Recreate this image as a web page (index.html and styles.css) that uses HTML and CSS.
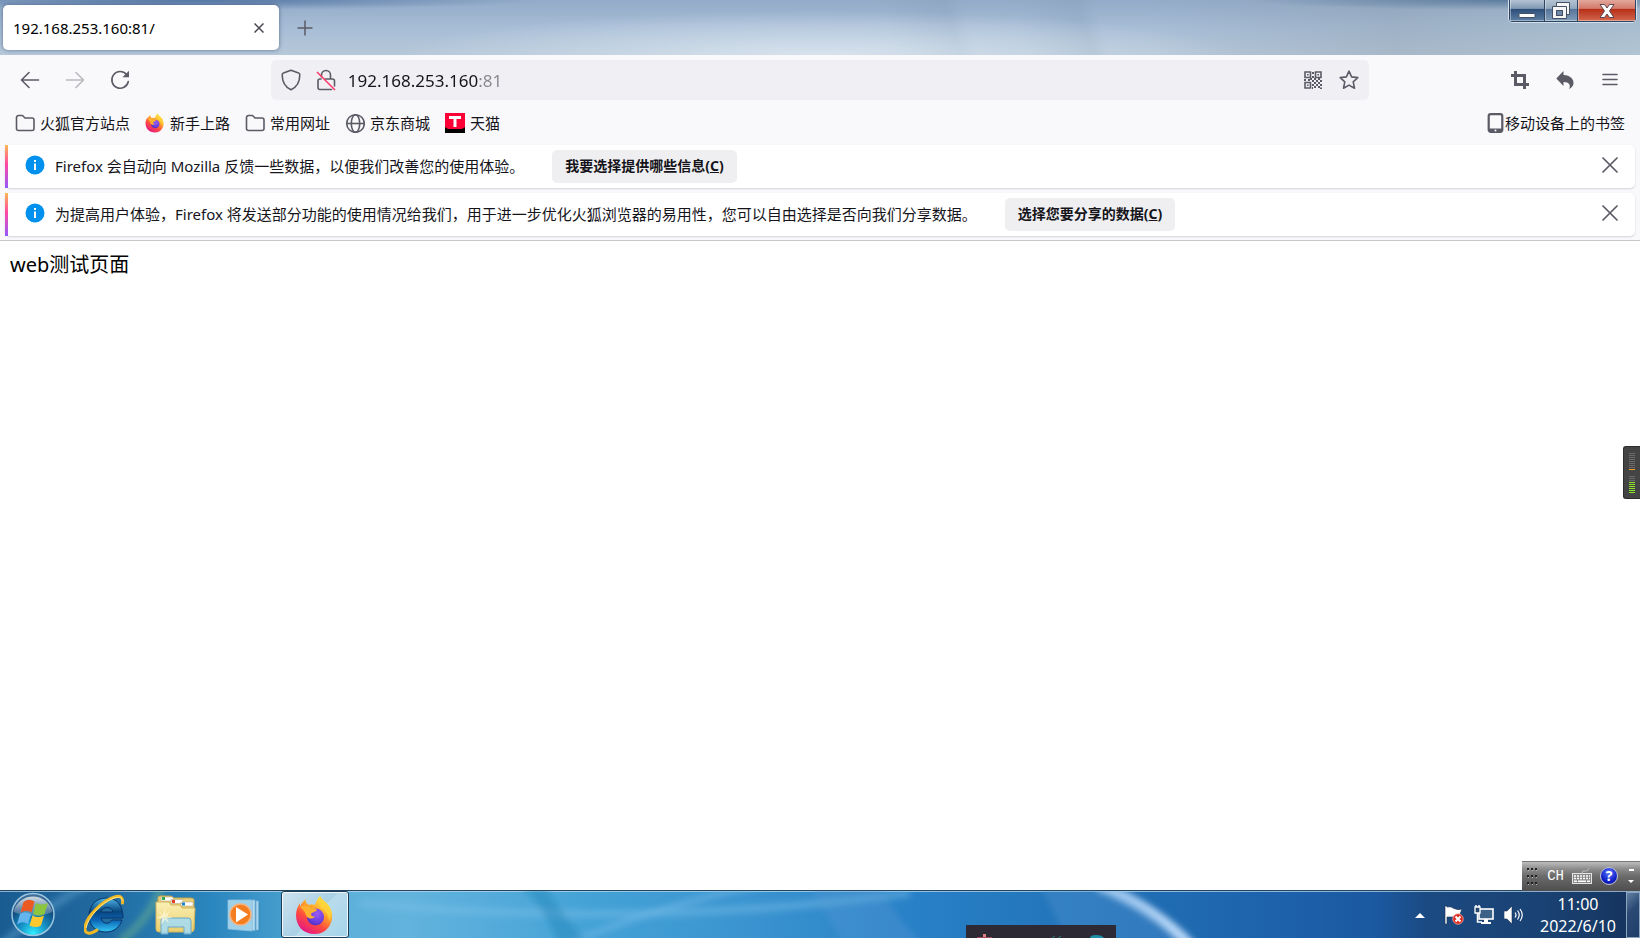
FILE: index.html
```html
<!DOCTYPE html>
<html lang="zh-CN">
<head>
<meta charset="utf-8">
<title>192.168.253.160:81/</title>
<link rel="stylesheet" href="styles.css">
</head>
<body>
<svg class="defs" aria-hidden="true">
  <defs>
    <linearGradient id="fx-body" x1="0.85" y1="0.1" x2="0.3" y2="1">
      <stop offset="0" stop-color="#fff04a"/><stop offset="0.35" stop-color="#ffa62a"/><stop offset="0.65" stop-color="#ff4b3e"/><stop offset="1" stop-color="#e31587"/>
    </linearGradient>
    <radialGradient id="fx-core" cx="0.6" cy="0.3" r="0.8">
      <stop offset="0" stop-color="#9a5cf5"/><stop offset="0.6" stop-color="#6a3fe0"/><stop offset="1" stop-color="#4a2bb0"/>
    </radialGradient>
    <symbol id="firefox" viewBox="0 0 40 40">
      <path fill="url(#fx-body)" d="M25 1c2 5 9 7 11 14 4 11-3 24-16 24C8 39 1 31 1 20c0-5 2-9 4-12v4c1-3 3-6 6-8-1 3 1 5 3 6 2-1 4-1 6 0 1-4 3-7 5-9z"/>
      <circle cx="20.500" cy="22" r="8.500" fill="url(#fx-core)"/>
      <path fill="#ffb02e" d="M5 12c4-2 8-2 11 1 3 0 5 1 6 2-1 2-5 2-6 4 0 2 2 3 4 2-2 4-8 3-9-1-1-3-3-6-6-8z"/>
      <path fill="#ffd53a" d="M25 1c2 5 9 7 11 14 1 4 0 8-2 11 0-7-4-10-8-13-3-3-3-8-1-12z" opacity="0.800"/>
    </symbol>
    <symbol id="folder" viewBox="0 0 20 20">
      <path fill="none" stroke="#5b5b66" stroke-width="1.600" stroke-linejoin="round" d="M1.500 4.500a2 2 0 0 1 2-2h4l2.500 2.500h7a2 2 0 0 1 2 2v8.500a2 2 0 0 1-2 2h-13.500a2 2 0 0 1-2-2z"/>
    </symbol>
    <symbol id="info" viewBox="0 0 20 20">
      <circle cx="10" cy="10" r="9.500" fill="#0090ed"/>
      <path fill="#fff" d="M9 5h2v2H9zM9 8.500h2V15H9z"/>
    </symbol>
    <symbol id="cross" viewBox="0 0 16 16">
      <path stroke="#5b5b66" stroke-width="1.700" stroke-linecap="round" d="M1 1l14 14M15 1L1 15"/>
    </symbol>
  </defs>
</svg>

<header class="titlebar">
  <div class="tab">
    <span class="tab-title">192.168.253.160:81/</span>
    <button class="tab-close" aria-label="关闭标签页"><svg width="10" height="10" viewBox="0 0 10 10"><path stroke="#4a4a52" stroke-width="1.500" d="M.5.500l9 9M9.500.500l-9 9"/></svg></button>
  </div>
  <button class="new-tab" aria-label="新建标签页"><svg width="16" height="16" viewBox="0 0 16 16"><path stroke="#5b5b66" stroke-width="1.500" d="M8 .5v15M.5 8h15"/></svg></button>
  <div class="window-controls">
    <button class="win-btn win-min" aria-label="最小化"><svg width="18" height="18" viewBox="0 0 18 18"><rect x="1" y="11.500" width="16" height="4" rx="1" fill="#fff" stroke="#435066"/></svg></button>
    <button class="win-btn win-max" aria-label="还原"><svg width="18" height="18" viewBox="0 0 18 18"><path fill="#f5f5f5" stroke="#435066" d="M4.500.500h13v12h-3v4H.5v-12h4z"/><path fill="none" stroke="#435066" d="M4.500 4.500h10v9"/><rect x="4.500" y="8.500" width="6" height="5" fill="#6d87a6" stroke="#435066"/></svg></button>
    <button class="win-btn win-close" aria-label="关闭"><svg width="18" height="18" viewBox="0 0 18 18"><path fill="#fff" stroke="#5b4650" stroke-linejoin="round" d="M2 2.500h4.500L9 6l2.500-3.500H16L11.500 9l4.500 6.500h-4.500L9 12l-2.500 3.500H2L6.500 9z"/></svg></button>
  </div>
</header>

<nav class="navbar">
  <button class="icon-btn" aria-label="后退"><svg width="20" height="20" viewBox="0 0 20 20"><path class="line" d="M18.500 10H2M9 2.500L1.500 10 9 17.500"/></svg></button>
  <button class="icon-btn faded" aria-label="前进"><svg width="20" height="20" viewBox="0 0 20 20"><path class="line" d="M1.500 10H18M11 2.500l7.500 7.500-7.500 7.500"/></svg></button>
  <button class="icon-btn" aria-label="刷新"><svg width="20" height="20" viewBox="0 0 20 20"><path class="line" d="M16.500 4.500A8.300 8.300 0 1 0 18.300 11.500"/><path fill="#5b5b66" d="M19 .8v6.400H12.500z"/></svg></button>
  <div class="spacer"></div>
  <div class="urlbar">
    <button class="url-icon" aria-label="跟踪保护"><svg width="20" height="22" viewBox="0 0 20 22"><path class="line" d="M10 1.200l7.600 2.900c.9.300 1.200.8 1.200 1.700 0 7-2.600 12.200-8.800 15-6.200-2.800-8.800-8-8.800-15 0-.9.300-1.400 1.200-1.700z"/></svg></button>
    <button class="url-icon" aria-label="连接不安全"><svg width="20" height="22" viewBox="0 0 20 22"><path class="line" d="M5.500 8V6a4.500 4.500 0 0 1 9 0v4M9 10h7.500a2 2 0 0 1 2 2v5M5 10h-1a2 2 0 0 0-2 2v6.500a2 2 0 0 0 2 2h11.500"/><path stroke="#ff3b6b" stroke-width="1.600" d="M1 3l18 18"/></svg></button>
    <input class="url-input" type="text" aria-label="地址" value="192.168.253.160:81">
    <button class="url-icon" aria-label="二维码"><svg width="18" height="18" viewBox="0 0 18 18"><g fill="none" stroke="#5b5b66" stroke-width="1.600"><path d="M1 1h5.500v5.500H1zM11.500 1H17v5.500h-5.500zM1 11.500h5.500V17H1z"/></g><path fill="#5b5b66" d="M3 3h1.600v1.600H3zM13.400 3H15v1.600h-1.600zM3 13.400h1.600V15H3zM8 1h2v2H8zM8 5h2v2H8zM0 8h2v2H0zM4 8h2v2H4zM6 7h2v2H6zM8 9h2v2H8zM10 7h2v2h-2zM12 9h2v2h-2zM14 7h2v2h-2zM16 9h2v2h-2zM10 11h2v2h-2zM14 11h2v2h-2zM8 13h2v2H8zM12 13h2v2h-2zM16 13h2v2h-2zM10 15h2v2h-2zM14 15h2v2h-2zM8 16h1v2H8zM16 16.500h2V18h-2z"/></svg></button>
    <button class="url-icon star" aria-label="加入书签"><svg width="20" height="20" viewBox="0 0 20 20"><path class="line" d="M10 1.200l2.600 5.700 6.200.7-4.600 4.200 1.300 6.400L10 15.100l-5.500 3.100 1.300-6.400L1.200 7.600l6.200-.7z"/></svg></button>
  </div>
  <div class="spacer"></div>
  <button class="icon-btn" aria-label="截图"><svg width="18" height="18" viewBox="0 0 18 18"><path fill="none" stroke="#5b5b66" stroke-width="3" d="M0 4.500h13.500V18M4.500 0v13.500H18"/></svg></button>
  <button class="icon-btn" aria-label="撤销"><svg width="18" height="18" viewBox="0 0 18 18"><path fill="#5b5b66" d="M7.500 0v4c7 .3 10.300 4 10 8.500-.2 2.500-2 4.500-4.500 5.500 2-3.500.5-7-5.500-7v4L.3 7.500z"/></svg></button>
  <button class="icon-btn" aria-label="菜单"><svg width="18" height="18" viewBox="0 0 18 18"><path class="line" d="M2 3.500h14M2 8.500h14M2 13.500h14"/></svg></button>
</nav>

<nav class="bookmarks">
  <a class="bookmark" href="#"><svg width="20" height="20"><use href="#folder"/></svg>火狐官方站点</a>
  <a class="bookmark" href="#"><svg width="20" height="20"><use href="#firefox"/></svg>新手上路</a>
  <a class="bookmark" href="#"><svg width="20" height="20"><use href="#folder"/></svg>常用网址</a>
  <a class="bookmark" href="#"><svg width="20" height="20" viewBox="0 0 20 20"><g fill="none" stroke="#5b5b66" stroke-width="1.600"><circle cx="10.500" cy="10.500" r="8.800"/><ellipse cx="10.500" cy="10.500" rx="4.200" ry="8.800"/><path d="M2 10.500h17"/></g></svg>京东商城</a>
  <a class="bookmark" href="#"><svg width="20" height="20" viewBox="0 0 20 20"><path fill="#ff0036" d="M0 0h20v20H0z"/><path fill="#000" d="M0 14l3 2h14l3-2v6H0z"/><path fill="#fff" d="M4 3h12v3h-4.500v8h-3V6H4z"/></svg>天猫</a>
  <a class="bookmark mobile" href="#"><svg width="18" height="20" viewBox="0 0 18 20"><rect x="1.700" y="1.200" width="13.600" height="17.600" rx="2" fill="none" stroke="#5b5b66" stroke-width="2.200"/><path fill="#5b5b66" d="M2 15.500h13V19H2z"/><circle cx="8.500" cy="17.500" r="1" fill="#f9f9fb"/></svg>移动设备上的书签</a>
</nav>

<section class="notices">
  <div class="notice">
    <svg class="notice-icon" width="20" height="20"><use href="#info"/></svg>
    <p class="notice-text">Firefox 会自动向 Mozilla 反馈一些数据，以便我们改善您的使用体验。</p>
    <button class="notice-btn">我要选择提供哪些信息(<u>C</u>)</button>
    <button class="notice-close" aria-label="关闭"><svg width="16" height="16"><use href="#cross"/></svg></button>
  </div>
  <div class="notice">
    <svg class="notice-icon" width="20" height="20"><use href="#info"/></svg>
    <p class="notice-text">为提高用户体验，Firefox 将发送部分功能的使用情况给我们，用于进一步优化火狐浏览器的易用性，您可以自由选择是否向我们分享数据。</p>
    <button class="notice-btn">选择您要分享的数据(<u>C</u>)</button>
    <button class="notice-close" aria-label="关闭"><svg width="16" height="16"><use href="#cross"/></svg></button>
  </div>
</section>

<main class="page">web测试页面</main>

<footer class="taskbar">
  <svg class="streaks" viewBox="0 0 1640 47" preserveAspectRatio="none" aria-hidden="true">
    <defs><filter id="soft" x="-20%" y="-50%" width="140%" height="200%"><feGaussianBlur stdDeviation="3"/></filter></defs>
    <g filter="url(#soft)" fill="none">
      <path d="M1098-6q56 22 94 62" stroke="#b5d6f7" stroke-width="11"/>
      <path d="M120 50q30-20 44-60" stroke="#8fd07a" stroke-opacity=".35" stroke-width="8"/>
      <path d="M0 55Q40 20 90-8" stroke="#6fb0d8" stroke-opacity=".4" stroke-width="8"/>
      <path d="M570 52Q660 14 760-6" stroke="#78bbec" stroke-opacity=".5" stroke-width="6"/>
      <path d="M360 12q280 26 550-10" stroke="#7fc3ec" stroke-opacity=".4" stroke-width="8"/>
      <path d="M520-5q20 15 40 60h30Q560 20 545-5z" fill="#1d7fb5" fill-opacity=".4"/>
      <path d="M1040-5l30 60h110Q1160 20 1110-5z" fill="#5a9ad8" fill-opacity=".3"/>
      <path d="M810-5l35 60h80Q890 20 880-5z" fill="#5a9ad8" fill-opacity=".3"/>
    </g>
  </svg>
  <button class="start" aria-label="开始">
    <svg width="46" height="46" viewBox="0 0 46 46">
      <defs>
        <radialGradient id="orb" cx=".5" cy=".95" r=".9"><stop offset="0" stop-color="#2ff0ff"/><stop offset=".35" stop-color="#1694c9"/><stop offset=".75" stop-color="#11497c"/><stop offset="1" stop-color="#3f6f98"/></radialGradient>
        <linearGradient id="gloss" x2="0" y2="1"><stop offset="0" stop-color="#fff" stop-opacity=".75"/><stop offset="1" stop-color="#fff" stop-opacity=".15"/></linearGradient>
      </defs>
      <circle cx="23" cy="22.500" r="21" fill="url(#orb)" stroke="#9ac5e0" stroke-width="1.500"/>
      <path fill="url(#gloss)" d="M3.500 20a20 20 0 0 1 39 0q-19 8-39 0z"/>
      <path fill="#ec5a24" d="M13.500 10q5-4 11-.5l-3 11q-5-3.500-11 0z"/>
      <path fill="#8cc63e" d="M26 11q5 3 12 0l-3.500 11q-5 3-11.500 0z"/>
      <path fill="#62b5ee" d="M10 22q5-3.500 11 0l-3 10q-5-3.500-11 .5z"/>
      <path fill="#fdc82e" d="M22.500 23.500q5 3 11.500 0l-3 10q-5 3-11.500 0z"/>
    </svg>
  </button>
  <button class="task" aria-label="Internet Explorer">
    <svg width="42" height="42" viewBox="0 0 42 42">
      <defs><linearGradient id="ie" x2="0" y2="1"><stop offset="0" stop-color="#4fb4e5"/><stop offset=".4" stop-color="#07467f"/><stop offset=".65" stop-color="#0b64b5"/><stop offset="1" stop-color="#35c8f5"/></linearGradient></defs>
      <path fill="url(#ie)" stroke="#0a3467" d="M22 4c11 0 17 7 17 20H17c1 6 8 7 11 2h10c-2 7-8 12-16 12C11 38 5 31 5 21.500S12 4 22 4zm-5 14h12c-1-6-11-6-12 0z"/>
      <path fill="none" stroke="#f2b824" stroke-width="3" stroke-linecap="round" d="M38.500 9c1-5-2-8-8-6C18 7 3 22 1 33c-1 7 5 8 12 3"/>
      <path fill="none" stroke="#ffe98a" stroke-width="1" d="M38 7c0-5-4-4-8-3C18 8 4 23 2 34"/>
    </svg>
  </button>
  <button class="task" aria-label="资源管理器">
    <svg width="42" height="42" viewBox="0 0 42 42">
      <defs><linearGradient id="fold" x2="0" y2="1"><stop offset="0" stop-color="#fbf0b4"/><stop offset="1" stop-color="#e9ce6c"/></linearGradient></defs>
      <path fill="#e8cf7c" stroke="#c5a54d" d="M4 4q0-2 2-2h11l3 2h17q3 0 3 2v30H4z"/>
      <path fill="#fff" stroke="#b9ad83" stroke-width=".6" d="M7 3h12v4H7zM17 5.500h12v4H17zM27 8h12v4H27z"/>
      <path fill="#2ea84c" d="M8 3h3v3H8z"/><path fill="#e13c2e" d="M18 6h3v3h-3z"/><path fill="#1a86d1" d="M28 8.500h3v3h-3z"/>
      <path fill="url(#fold)" stroke="#d2b45c" d="M2 8h13l2 3h9l2 3h13l-1 21q0 3-3 3H5q-3 0-3-3z"/>
      <path fill="#a6daf0" fill-opacity=".9" stroke="#6ba9c8" d="M7 27q0-3 2-3h25q3 0 3 3v13h-7v-7H14v7H7z"/>
      <path fill="#fffbe0" opacity=".7" d="M11 13l.5 8 4.500-5-3 6.500 6 1-6 1 2 5-4-4-4 5 1-6-6-1 6-1.500-4-5.500 5 4.500z"/>
    </svg>
  </button>
  <button class="task" aria-label="媒体播放器">
    <svg width="42" height="42" viewBox="0 0 42 42">
      <path fill="#3e8ab8" opacity=".6" d="M16 35l20 3V9l-20 2z"/>
      <path fill="#a6d4ec" stroke="#73b4d9" stroke-width=".8" d="M32 7h2.500v29H32z"/>
      <path fill="#b6dcf0" stroke="#73add0" stroke-width=".8" d="M28 6h3v31l-3-1z"/>
      <path fill="#9fd0ea" stroke="#8fc3e0" stroke-width=".8" d="M4 6h24v31L4 35z"/>
      <circle cx="16.500" cy="20.500" rx="10" r="10.500" fill="#f47d20" stroke="#f7b27c" stroke-width="1.500"/>
      <path fill="#fff" d="M12 13l12 7.500-12 8z"/>
    </svg>
  </button>
  <button class="task active" aria-label="Firefox"><svg width="40" height="40"><use href="#firefox"/></svg></button>

  <div class="dock" aria-hidden="true">
    <svg width="150" height="13" viewBox="0 0 150 13"><path fill="#e27d83" d="M17 9h3v4h-3z"/><path fill="#9b4b57" d="M11 12h15v1H11z"/><path fill="none" stroke="#2a7d78" d="M86 13l3-2M92 13l3-2"/><path fill="#1f8fa8" d="M124 13q0-3 6-3t8 3z"/></svg>
  </div>

  <div class="tray">
    <button class="tray-btn" aria-label="显示隐藏的图标"><svg width="20" height="20" viewBox="0 0 20 20"><path fill="#fff" d="M5 13l5-5 5 5z"/></svg></button>
    <button class="tray-btn" aria-label="操作中心"><svg width="20" height="20" viewBox="0 0 20 20"><path fill="#fff" stroke="#1a3050" stroke-width=".6" d="M1 1h2v1q4-1 7 1.500 4 2 8 .5l-2 5 2 3H3v7H1z"/><circle cx="14" cy="14" r="5.300" fill="#dc2c24" stroke="#f5b0a5" stroke-width=".7"/><path stroke="#fff" stroke-width="2" d="M11.500 11.500l5 5M16.500 11.500l-5 5"/></svg></button>
    <button class="tray-btn" aria-label="网络"><svg width="20" height="20" viewBox="0 0 20 20"><rect x="5" y="4" width="14" height="10" fill="#3c6288" stroke="#fff" stroke-width="1.600"/><path fill="#fff" d="M10 14h4v3h3v2H7v-2h3z"/><path fill="#28486c" stroke="#fff" stroke-width="1.300" d="M1 2h5v6H1z"/><path fill="none" stroke="#fff" stroke-width="1.500" d="M3.500 8v9H8M2 0v2M5 0v2"/></svg></button>
    <button class="tray-btn" aria-label="音量"><svg width="20" height="20" viewBox="0 0 20 20"><path fill="#fff" stroke="#1a3050" stroke-width=".6" d="M0 6h3l5-5v18l-5-5H0z"/><path fill="none" stroke="#fff" stroke-width="1.200" d="M11 7.500q2 2.500 0 5M13.500 5.500q3.500 4.500 0 9M16 4q4.500 6 0 12"/></svg></button>
    <div class="clock"><span>11:00</span><span>2022/6/10</span></div>
    <button class="show-desktop" aria-label="显示桌面"></button>
  </div>

  <div class="langbar">
    <svg width="12" height="18" viewBox="0 0 12 18"><path stroke="#222" stroke-width="2" stroke-dasharray="2 2" d="M0 2h11M0 9h11M0 16h11"/><path stroke="#bbb" stroke-width="1" stroke-dasharray="1 3" d="M1 3.500h11M1 10.500h11M1 17.500h11"/></svg>
    <button class="lang">CH</button>
    <button class="lang-btn" aria-label="键盘"><svg width="20" height="16" viewBox="0 0 20 16"><path fill="none" stroke="#bbb" d="M10 5q0-3 3-2t4-3"/><rect x=".5" y="5.500" width="19" height="10" fill="#888" stroke="#e4e4e4"/><path stroke="#fff" stroke-width="1.500" stroke-dasharray="2 1" d="M2 8h16M2 10.500h16"/><path stroke="#fff" stroke-width="1.500" d="M2 13.200h3M6 13.200h8M15 13.200h3"/></svg></button>
    <button class="lang-btn help" aria-label="帮助">?</button>
    <svg class="lang-more" width="6" height="16" viewBox="0 0 6 16"><path fill="#fff" d="M1 1h5v2H1zM0 12h6l-3 3z"/></svg>
  </div>
</footer>

<aside class="meter" aria-hidden="true"><div class="meter-top"></div><div class="meter-low"></div></aside>
</body>
</html>
```
FILE: styles.css
```css
* { box-sizing: border-box; }

body {
  margin: 0;
  min-height: 100vh;
  display: flex;
  flex-direction: column;
  position: relative;
  background: #fff;
  color: #15141a;
  font: 15px/20px "Noto Sans", "Noto Sans CJK SC", sans-serif;
}

button {
  margin: 0;
  padding: 0;
  border: 0;
  background: none;
  color: inherit;
  font: inherit;
  display: flex;
  align-items: center;
  justify-content: center;
  flex: none;
}

svg { display: block; flex: none; }

.defs { position: absolute; width: 0; height: 0; }

.line {
  fill: none;
  stroke: #5b5b66;
  stroke-width: 1.6px;
  stroke-linecap: round;
  stroke-linejoin: round;
}

/* Title bar */
.titlebar {
  display: flex;
  align-items: flex-start;
  height: 55px;
  padding: 0 3px;
  background:
    radial-gradient(ellipse 340px 10px at 12% 0, #5578a6, transparent),
    radial-gradient(ellipse 260px 10px at 92% 0, #5d7d9f, transparent),
    radial-gradient(ellipse 420px 44px at 50% 100%, rgba(226, 235, 244, .75), transparent),
    linear-gradient(72deg, transparent 54%, rgba(120, 146, 170, .2) 58%, transparent 59%, transparent 62%, rgba(120, 146, 170, .2) 66%, transparent 67%),
    linear-gradient(90deg, transparent 70%, rgba(140, 155, 170, .35) 85%, rgba(170, 190, 200, .4)),
    linear-gradient(#93abc8, #a7bdd6 50%, #b6c8d9);
}

.tab {
  display: flex;
  align-items: center;
  justify-content: space-between;
  width: 276px;
  height: 45px;
  margin-top: 5px;
  padding: 0 10px;
  border-radius: 5px;
  background: #fff;
  color: #000;
  box-shadow: 0 0 4px rgba(40, 60, 100, .6);
}

.tab-close { width: 20px; height: 20px; }

.new-tab { width: 32px; height: 32px; margin: 12px 0 0 10px; }

.window-controls {
  display: flex;
  height: 23px;
  margin-left: auto;
  border: 1px solid #d5e0ea;
  border-top: 0;
  border-radius: 0 0 5px 5px;
  overflow: hidden;
}

.win-btn {
  width: 33px;
  border: 1px solid #2c4563;
  border-width: 0 1px 1px 0;
  background: linear-gradient(#b4c3d3, #8098b2 40%, #2d4f79 45%, #5c7ea3);
  box-shadow: inset 1px -1px 0 rgba(255, 255, 255, .4);
}

.win-min { width: 36px; border-left-width: 1px; }
.win-max { background: linear-gradient(#b4c3d3, #93a8bd 40%, #58769a 45%, #7f9cb8); }
.win-close { width: 58px; background: linear-gradient(#e3a79c, #d27a6b 40%, #b8301a 45%, #d3674d); }

/* Navigation bar */
.navbar {
  display: flex;
  align-items: center;
  gap: 5px;
  height: 50px;
  padding: 0 10px;
  background: #f9f9fb;
}

.icon-btn { width: 40px; height: 40px; }
.faded { opacity: .4; }
.spacer { flex: 122 0 0; }

.urlbar {
  flex: 1094 0 0;
  display: flex;
  align-items: center;
  height: 40px;
  padding: 0 5px 0 10px;
  border-radius: 5px;
  background: #f0f0f4;
}

.url-icon { width: 20px; height: 30px; margin-right: 15px; }
.url-icon + .url-input { margin-left: -3px; }
.star { width: 30px; margin: 0 0 0 -4px; }

.url-input {
  flex: 1;
  min-width: 0;
  height: 30px;
  padding: 0;
  border: 0;
  outline: 0;
  color: #15141a;
  font: 17px/24px "Noto Sans", "Noto Sans CJK SC", sans-serif;
  background: linear-gradient(90deg, #15141a 131px, #85858c 131px);
  -webkit-background-clip: text;
  background-clip: text;
  -webkit-text-fill-color: transparent;
}

/* Bookmarks bar */
.bookmarks {
  display: flex;
  align-items: center;
  gap: 15px;
  height: 40px;
  padding: 0 15px 4px;
  background: #f9f9fb;
}

.bookmark {
  display: flex;
  align-items: center;
  gap: 5px;
  color: #15141a;
  text-decoration: none;
  white-space: nowrap;
}

.mobile { gap: 0; margin-left: auto; }

/* Notification bars */
.notices {
  display: flex;
  flex-direction: column;
  gap: 5px;
  padding: 0 5px 4px;
  border-bottom: 1px solid #c8c8cd;
  background: #f9f9fb;
}

.notice {
  display: flex;
  align-items: center;
  padding: 5px 13px 5px 17px;
  border-left: 3px solid;
  border-image: linear-gradient(#ffbd4f, #ff4aa2 45%, #9059ff) 1;
  border-radius: 5px;
  background: #fff;
  box-shadow: 0 1px 2px rgba(58, 57, 68, .2);
}

.notice-icon { margin-bottom: 3px; }
.notice-text { margin: 0 0 2px 10px; }

.notice-btn {
  height: 33px;
  margin-left: 28px;
  padding: 0 13px 2px;
  border-radius: 5px;
  background: #efeff1;
  font-size: 14px;
  font-weight: 700;
  white-space: nowrap;
}

.notice-close { width: 24px; height: 24px; margin: 0 0 3px auto; }

/* Page content */
.page {
  flex: 1;
  padding: 10px;
  color: #000;
  font-size: 20px;
  line-height: 28px;
}

/* Task bar */
.taskbar {
  position: relative;
  display: flex;
  height: 48px;
  padding-left: 10px;
  border-top: 1px solid #23445f;
  background: linear-gradient(90deg, #1a5c92, #20699f 6%, #2b87bf 13%, #5db0da 21%, #62b3dd 25%, #44a2d6 36%, #3a93cf 46%, #2880c6 56%, #2273b8 66%, #1c5fa8 80%, #1b58a0 84%, #1b4a82 87%, #1a4273 94%, #15335c);
  box-shadow: inset 0 1px 0 rgba(190, 220, 240, .7);
}

.streaks { position: absolute; inset: 0; width: 100%; height: 100%; }
.start, .task, .tray { position: relative; }
.start { width: 46px; }
.task { width: 68px; margin-right: 2px; }
.start + .task { margin-left: 15px; }

.task.active {
  margin: 0;
  border: 1px solid #1d3c55;
  border-radius: 3px;
  background: linear-gradient(135deg, #cfe3ef, #a9d0e5 50%, #b9dcec 52%, #a4d3e9);
  box-shadow: inset 0 0 0 1px rgba(255, 255, 255, .8);
}

.dock {
  position: absolute;
  right: 524px;
  bottom: 0;
  background: #2d2a35;
}

.tray {
  display: flex;
  align-items: center;
  gap: 10px;
  margin-left: auto;
  color: #fff;
}

.tray-btn { width: 20px; height: 20px; }
.tray-btn:first-child { margin-right: 4px; }

.clock {
  display: flex;
  flex-direction: column;
  align-items: center;
  margin-left: 6px;
  font-size: 16px;
  line-height: 22px;
}

.show-desktop {
  width: 14px;
  height: 46px;
  border: 1px solid #8ba5c0;
  background: linear-gradient(135deg, #6482a4, #2a4a74 40%, #1f3e68);
}

/* Language bar above the tray */
.langbar {
  position: absolute;
  right: 0;
  bottom: 100%;
  display: flex;
  align-items: center;
  gap: 8px;
  height: 30px;
  padding: 0 6px 2px 5px;
  border-top: 1px solid #777;
  background: linear-gradient(#bdbdbd, #8a8a8a 25%, #6a6a6a 50%, #4e4e4e);
  color: #fff;
}

.lang { font: 14px/20px "Liberation Mono", monospace; }
.lang-more { margin-left: 2px; }

.help {
  width: 18px;
  height: 18px;
  border: 1px solid #c3c3d6;
  border-radius: 50%;
  background: radial-gradient(circle at 50% 30%, #5a78ff, #1020c8 60%, #0a1090);
  font-size: 14px;
  font-weight: 700;
  line-height: 16px;
}

/* Level meter on the right edge */
.meter {
  position: absolute;
  top: 446px;
  right: 0;
  display: flex;
  flex-direction: column;
  gap: 6px;
  width: 17px;
  padding: 6px 5px 5px;
  border: 1px solid #2d2d2d;
  border-right: 0;
  border-radius: 3px 0 0 3px;
  background: #444;
}

.meter-top, .meter-low { height: 17px; }
.meter-top { background: repeating-linear-gradient(#6a6a6a 0 1px, transparent 1px 2px); border-bottom: 1px solid #f0a030; }
.meter-low { background: repeating-linear-gradient(transparent 0 1px, #444 1px 2px), linear-gradient(#6a6a6a 6px, #8be52c 6px); }
```
